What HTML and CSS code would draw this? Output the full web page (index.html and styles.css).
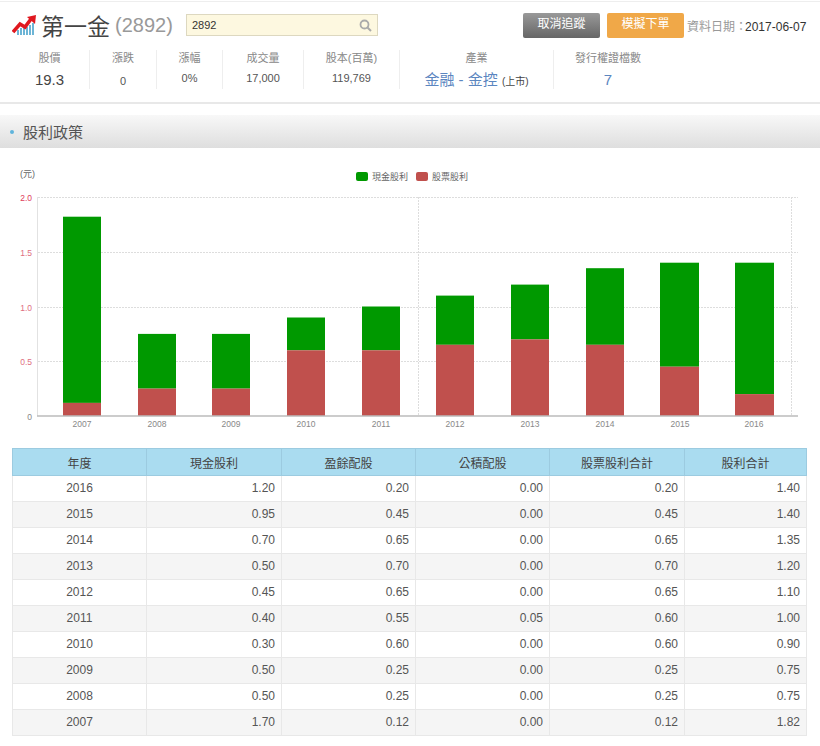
FILE: index.html
```html
<!DOCTYPE html>
<html lang="zh-Hant">
<head>
    <meta charset="UTF-8">
    <title>第一金 股利政策</title>
    <link rel="stylesheet" href="styles.css">
</head>
<body>
    <div class="stock-header">
        <div class="title-row">
            <svg class="logo" width="24" height="20" viewBox="0 0 24 20">
                <rect x="5" y="15" width="2" height="5" fill="#6db5d6"/>
                <rect x="8" y="13" width="2" height="7" fill="#6db5d6"/>
                <rect x="11" y="13" width="2" height="7" fill="#6db5d6"/>
                <rect x="14" y="12" width="2" height="8" fill="#6db5d6"/>
                <rect x="17" y="10" width="2" height="10" fill="#6db5d6"/>
                <rect x="20" y="8" width="2" height="12" fill="#6db5d6"/>
                <path d="M1 17 L8 9 L13 12 L19 4" fill="none" stroke="#e0181f" stroke-width="3.6"/>
                <path d="M15 2 L24 0 L23 9 Z" fill="#e0181f"/>
            </svg>
            <span class="stock-name">第一金</span>
            <span class="stock-code">(2892)</span>
            <div class="search-box">
                <span>2892</span>
                <svg width="13" height="13" viewBox="0 0 13 13">
                    <circle cx="5.5" cy="5.5" r="4" fill="none" stroke="#aaa" stroke-width="1.8"/>
                    <path d="M8.5 8.5 L12 12" stroke="#aaa" stroke-width="2"/>
                </svg>
            </div>
            <a class="btn btn-grey" href="#">取消追蹤</a>
            <a class="btn btn-orange" href="#">模擬下單</a>
            <div class="data-date">資料日期：<b>2017-06-07</b></div>
        </div>
        <div class="stats-row">
            <div class="stat"><div class="stat-label">股價</div><div class="stat-value big">19.3</div></div>
            <div class="stat"><div class="stat-label">漲跌</div><div class="stat-value low">0</div></div>
            <div class="stat"><div class="stat-label">漲幅</div><div class="stat-value">0%</div></div>
            <div class="stat"><div class="stat-label">成交量</div><div class="stat-value">17,000</div></div>
            <div class="stat"><div class="stat-label">股本(百萬)</div><div class="stat-value">119,769</div></div>
            <div class="stat"><div class="stat-label">產業</div><div class="stat-value link">金融 - 金控 <small>(上市)</small></div></div>
            <div class="stat last"><div class="stat-label">發行權證檔數</div><div class="stat-value link">7</div></div>
        </div>
    </div>

    <div class="section-title"><i></i>股利政策</div>

    <svg class="chart" width="820" height="292" viewBox="0 148 820 292">
        <text class="unit" x="20" y="177">(元)</text>

        <!-- legend -->
        <rect x="356" y="172" width="12" height="9" rx="2" fill="#009900"/>
        <text class="legend" x="372" y="180">現金股利</text>
        <rect x="416" y="172" width="12" height="9" rx="2" fill="#c0504d"/>
        <text class="legend" x="432" y="180">股票股利</text>

        <!-- grid -->
        <g class="grid">
            <line x1="38" y1="197.5" x2="798" y2="197.5"/>
            <line x1="38" y1="252.5" x2="798" y2="252.5"/>
            <line x1="38" y1="307.5" x2="798" y2="307.5"/>
            <line x1="38" y1="361.5" x2="798" y2="361.5"/>
            <line x1="418.5" y1="197" x2="418.5" y2="416"/>
            <line x1="791.5" y1="197" x2="791.5" y2="416"/>
        </g>

        <!-- bars -->
        <g fill="#009900">
            <rect x="63" y="216.7" width="38" height="186.2"/>
            <rect x="138" y="333.9" width="38" height="54.7"/>
            <rect x="212" y="333.9" width="38" height="54.7"/>
            <rect x="287" y="317.5" width="38" height="32.8"/>
            <rect x="362" y="306.5" width="38" height="43.8"/>
            <rect x="436" y="295.6" width="38" height="49.2"/>
            <rect x="511" y="284.6" width="38" height="54.8"/>
            <rect x="586" y="268.2" width="38" height="76.6"/>
            <rect x="660" y="262.7" width="39" height="104"/>
            <rect x="735" y="262.7" width="39" height="131.4"/>
        </g>
        <g fill="#c0504d">
            <rect x="63" y="402.9" width="38" height="13.1"/>
            <rect x="138" y="388.6" width="38" height="27.4"/>
            <rect x="212" y="388.6" width="38" height="27.4"/>
            <rect x="287" y="350.3" width="38" height="65.7"/>
            <rect x="362" y="350.3" width="38" height="65.7"/>
            <rect x="436" y="344.8" width="38" height="71.2"/>
            <rect x="511" y="339.4" width="38" height="76.6"/>
            <rect x="586" y="344.8" width="38" height="71.2"/>
            <rect x="660" y="366.7" width="39" height="49.3"/>
            <rect x="735" y="394.1" width="39" height="21.9"/>
        </g>

        <!-- axes -->
        <line class="axis-y" x1="37.5" y1="197" x2="37.5" y2="416"/>
        <line class="axis-x" x1="37" y1="416" x2="798" y2="416"/>
        <g class="y-labels">
            <text class="top" x="32" y="201">2.0</text>
            <text x="32" y="256">1.5</text>
            <text x="32" y="311">1.0</text>
            <text x="32" y="365">0.5</text>
            <text class="zero" x="32" y="420">0</text>
        </g>
        <g class="x-labels">
            <text x="82" y="427">2007</text>
            <text x="157" y="427">2008</text>
            <text x="231" y="427">2009</text>
            <text x="306" y="427">2010</text>
            <text x="381" y="427">2011</text>
            <text x="455" y="427">2012</text>
            <text x="530" y="427">2013</text>
            <text x="605" y="427">2014</text>
            <text x="680" y="427">2015</text>
            <text x="754" y="427">2016</text>
        </g>
    </svg>

    <table class="dividend-table">
        <colgroup>
            <col class="col-a"><col class="col-b"><col class="col-a"><col class="col-a"><col class="col-b"><col class="col-c">
        </colgroup>
        <thead>
            <tr><th>年度</th><th>現金股利</th><th>盈餘配股</th><th>公積配股</th><th>股票股利合計</th><th>股利合計</th></tr>
        </thead>
        <tbody>
            <tr><td>2016</td><td>1.20</td><td>0.20</td><td>0.00</td><td>0.20</td><td>1.40</td></tr>
            <tr><td>2015</td><td>0.95</td><td>0.45</td><td>0.00</td><td>0.45</td><td>1.40</td></tr>
            <tr><td>2014</td><td>0.70</td><td>0.65</td><td>0.00</td><td>0.65</td><td>1.35</td></tr>
            <tr><td>2013</td><td>0.50</td><td>0.70</td><td>0.00</td><td>0.70</td><td>1.20</td></tr>
            <tr><td>2012</td><td>0.45</td><td>0.65</td><td>0.00</td><td>0.65</td><td>1.10</td></tr>
            <tr><td>2011</td><td>0.40</td><td>0.55</td><td>0.05</td><td>0.60</td><td>1.00</td></tr>
            <tr><td>2010</td><td>0.30</td><td>0.60</td><td>0.00</td><td>0.60</td><td>0.90</td></tr>
            <tr><td>2009</td><td>0.50</td><td>0.25</td><td>0.00</td><td>0.25</td><td>0.75</td></tr>
            <tr><td>2008</td><td>0.50</td><td>0.25</td><td>0.00</td><td>0.25</td><td>0.75</td></tr>
            <tr><td>2007</td><td>1.70</td><td>0.12</td><td>0.00</td><td>0.12</td><td>1.82</td></tr>
        </tbody>
    </table>
</body>
</html>
```

FILE: styles.css
```css
body {
    margin: 0;
    background: #fff;
    color: #444;
    font-family: "Liberation Sans", "Noto Sans CJK TC", sans-serif;
    overflow: hidden;
}
.stock-header {
    margin-top: 1px;
    height: 103px;
    border-top: 1px solid #eee;
    border-bottom: 2px solid #e8e8e8;
    box-sizing: border-box;
    background: #fff;
}
.title-row {
    display: flex;
    align-items: center;
    height: 36px;
    padding: 5px 0 0 12px;
}
.logo {
    margin-right: 5px;
}
.stock-name {
    font-size: 23px;
    color: #444;
    width: 74px;
}
.stock-code {
    font-size: 20px;
    color: #999;
    width: 71px;
}
.search-box {
    display: flex;
    align-items: center;
    justify-content: space-between;
    width: 192px;
    height: 22px;
    padding: 0 5px;
    box-sizing: border-box;
    background: #fdf8e0;
    border: 1px solid #ddd8c0;
    font-size: 11px;
    color: #333;
    margin-right: 145px;
}
.btn {
    display: block;
    width: 77px;
    height: 25px;
    line-height: 23px;
    text-align: center;
    font-size: 12px;
    color: #fff;
    text-decoration: none;
    border-radius: 2px;
}
.btn-grey {
    background: linear-gradient(#999, #666);
    margin-right: 7px;
}
.btn-orange {
    background: #f0a848;
    margin-right: 3px;
}
.data-date {
    font-size: 12px;
    color: #999;
    white-space: nowrap;
}
.data-date b {
    font-weight: normal;
    color: #333;
    margin-left: -2px;
}
.stats-row {
    display: grid;
    grid-template-columns: 80px 67px 66px 81px 96px 154px 108px;
    margin: 7px 0 0 10px;
}
.stat {
    height: 39px;
    border-right: 1px solid #eee;
    text-align: center;
}
.stat.last {
    border-right: none;
}
.stat-label {
    font-size: 11px;
    color: #888;
    line-height: 16px;
}
.stat-value {
    font-size: 11px;
    color: #555;
    line-height: 24px;
}
.stat-value.low {
    line-height: 30px;
}
.stat-value.big {
    font-size: 15px;
    line-height: 28px;
    color: #444;
}
.stat-value.link {
    font-size: 15px;
    line-height: 28px;
    color: #5b86c0;
}
.stat-value small {
    font-size: 10px;
    color: #444;
}
.section-title {
    margin-top: 11px;
    height: 33px;
    padding-left: 10px;
    font-size: 15px;
    color: #555;
    background: linear-gradient(#f8f8f8, #dedede);
    display: flex;
    align-items: center;
}
.section-title i {
    width: 4px;
    height: 4px;
    border-radius: 50%;
    background: #5fb4dc;
    margin-right: 9px;
}
.chart {
    display: block;
}
.chart text {
    font-size: 8.5px;
    fill: #888;
}
.chart .legend {
    font-size: 9px;
    fill: #666;
}
.chart .unit {
    font-size: 9px;
    fill: #666;
}
.grid line {
    stroke: #ddd;
    stroke-width: 1;
    stroke-dasharray: 2 1;
}
.axis-y {
    stroke: #e2e2e2;
    stroke-width: 1;
}
.axis-x {
    stroke: #bbb;
    stroke-width: 1.5;
}
.y-labels text {
    text-anchor: end;
    fill: #e0707f;
}
.y-labels .top {
    fill: #e0405a;
}
.y-labels .zero {
    fill: #888;
}
.x-labels text {
    text-anchor: middle;
}
.dividend-table {
    margin: 8px 0 0 12px;
    width: 794px;
    border-collapse: collapse;
    table-layout: fixed;
    font-size: 12px;
    color: #555;
}
.col-a {
    width: 134px;
}
.col-b {
    width: 135px;
}
.col-c {
    width: 122px;
}
.dividend-table th {
    height: 26px;
    padding: 0;
    font-weight: normal;
    background: #aadcf0;
    color: #444;
    border: 1px solid #9ccbe0;
}
.dividend-table td {
    height: 26px;
    padding: 0 6px 2px;
    box-sizing: border-box;
    text-align: right;
    border: 1px solid #e8e8e8;
}
.dividend-table td:first-child {
    text-align: center;
}
.dividend-table tbody tr:nth-child(even) td {
    background: #f5f5f5;
}
```
